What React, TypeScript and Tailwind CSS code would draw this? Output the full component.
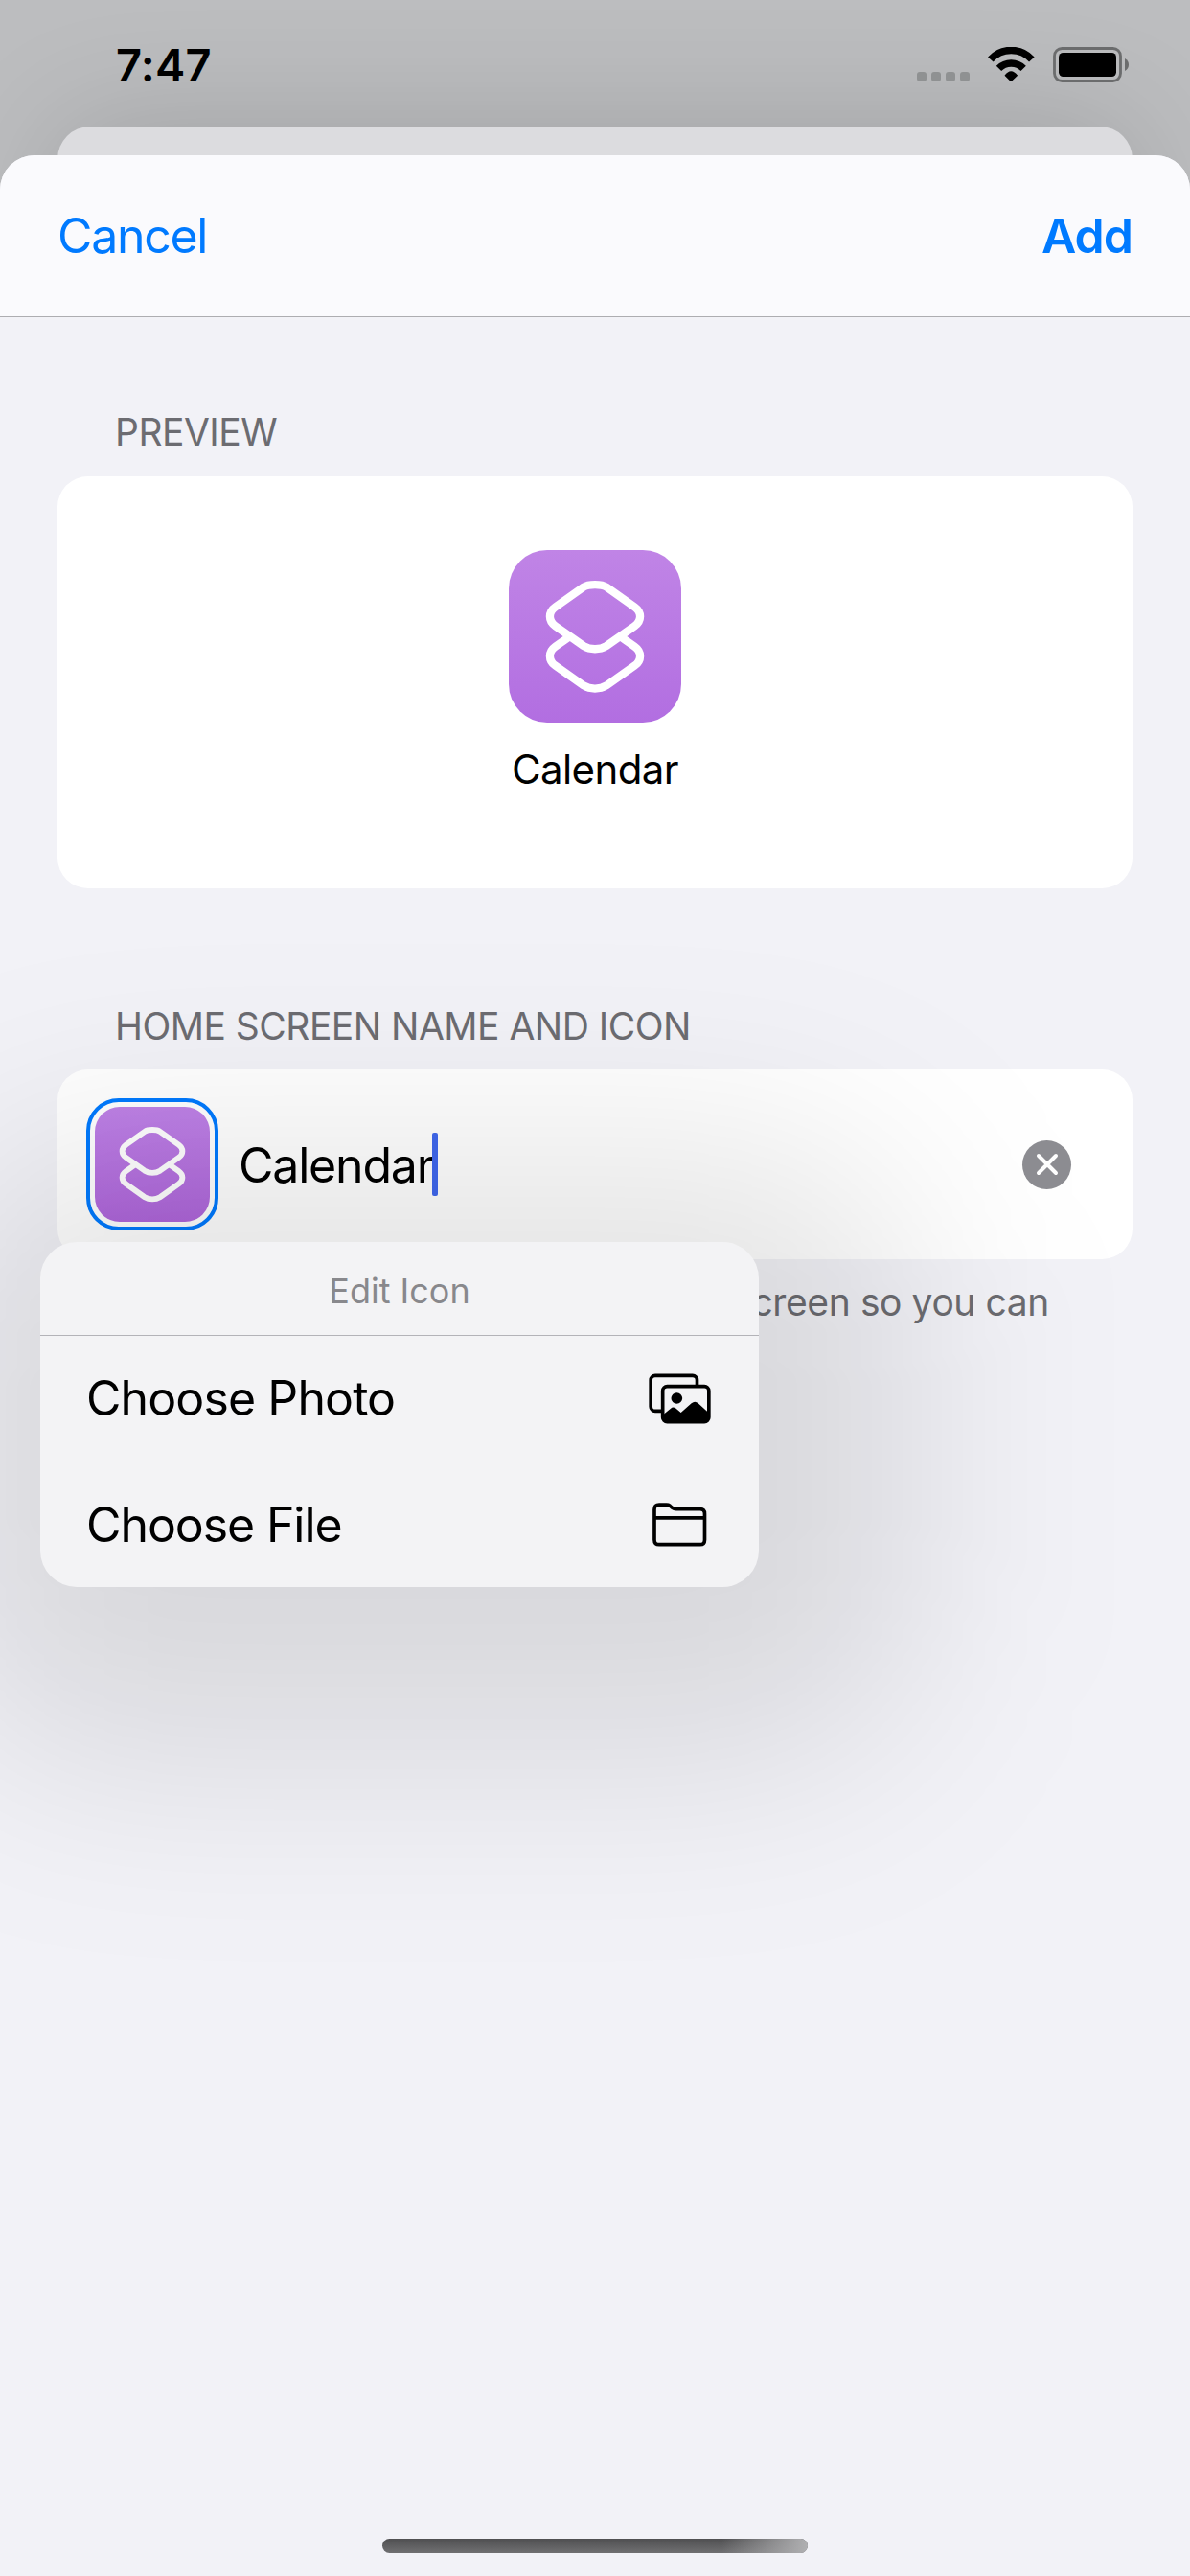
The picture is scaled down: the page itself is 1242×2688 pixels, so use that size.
import React from "react";

function WifiIcon() {
  return (
    <svg className="h-[36px] w-[49px]" viewBox="394 147 146 108" fill="none">
      <path d="M402 186A87 87 0 0 1 531 186" stroke="#000" strokeWidth="22.5" />
      <path d="M428 214A54 54 0 0 1 505 214" stroke="#000" strokeWidth="22.5" />
      <path d="M446 236Q466 209 487 236L468 254Q466 256 464 254Z" fill="#000" />
    </svg>
  );
}

function BatteryIcon() {
  return (
    <svg className="h-[37px] w-[79px]" viewBox="597 147 237 111" fill="none">
      <rect x="601.5" y="151.5" width="207" height="102" rx="24" stroke="#6b6c6d" strokeWidth="8.5" />
      <rect x="615" y="165" width="180" height="75" rx="14" fill="#000" />
      <path d="M822 183Q834 190 834 202.500Q834 215 822 222Z" fill="#6b6c6d" />
    </svg>
  );
}

function ShortcutGlyph({ className, stroke }: { className: string; stroke: number }) {
  return (
    <svg className={className} viewBox="0 0 180 180" fill="none" stroke="#fff" strokeWidth={stroke}>
      <path d="M78 38.700C83 35.200 97 35.200 102 38.700L131.300 59.300C139 64.700 139 74 131.300 79.400L102 100C95 104.300 85 104.300 78 100L48.700 79.400C41 74 41 64.700 48.700 59.300Z" />
      <path d="M63 90.600L48.700 100.600C41 106 41 115.300 48.700 120.700L78 141.300C85 145.600 95 145.600 102 141.300L131.300 120.700C139 115.300 139 106 131.300 100.600L117 90.600" />
    </svg>
  );
}

function PhotosIcon() {
  return (
    <svg className="h-[53px] w-[65px]" viewBox="227 157 195 159" fill="none">
      <rect x="233.500" y="164" width="145" height="111" rx="14" stroke="#000" strokeWidth="11" />
      <rect x="271" y="198" width="144.500" height="111" rx="14" fill="#f3f3f5" stroke="#000" strokeWidth="11" />
      <circle cx="315" cy="235" r="17.500" fill="#000" />
      <path d="M272 287L296 267Q303 260 311 266L328 280L361 251Q372 242 382 251L415 281V296Q415 309 402 309H284Q272 309 272 297Z" fill="#000" />
    </svg>
  );
}

function FolderIcon() {
  return (
    <svg className="h-[46px] w-[57px]" viewBox="240 565 171 138" fill="none" stroke="#000" strokeWidth="11">
      <path d="M246 587Q246 571.500 261 571.500H284Q290 571.500 295 575L302 581Q307 585 314 585H389Q403.500 585 403.500 600V681Q403.500 696 389 696H261Q246 696 246 681Z" />
      <path d="M246 612.500H404" />
    </svg>
  );
}

function StatusBar() {
  return (
    <div className="relative z-10 flex h-[132px] shrink-0 items-start justify-between pl-[121px] pr-[64px]">
      <span className="mt-[38px] text-[47px] font-semibold leading-[60px] tracking-[0.2px] text-black">7:47</span>
      <div className="mt-[49px] flex h-[37px] items-start">
        <div className="mr-[19px] mt-[26px] flex gap-[5px]">
          {[0, 1, 2, 3].map((i) => (
            <span key={i} className="size-[10px] rounded-[3px] bg-[#8f9192]" />
          ))}
        </div>
        <WifiIcon />
        <span className="w-[19px]" />
        <BatteryIcon />
      </div>
    </div>
  );
}

function IconMenu() {
  return (
    <div className="absolute left-[-18px] top-[180px] z-20 h-[360px] w-[750px]">
      <div className="absolute -bottom-[180px] -left-[100px] -right-[160px] -top-[100px] rounded-[160px] bg-black/[0.105] blur-[110px]" />
      <div className="relative flex h-full flex-col rounded-[38px] bg-[#f3f3f5]">
        <div className="flex h-[98px] items-center justify-center border-b border-[#b3b3b8] pt-[5px] text-[36px] text-[#88888c]">
          Edit Icon
        </div>
        <div className="flex h-[131px] items-center justify-between border-b border-[#b3b3b8] pl-[48px] pr-[50px] text-[50px] text-black">
          <span className="tracking-[-0.9px]">Choose Photo</span>
          <PhotosIcon />
        </div>
        <div className="flex flex-1 items-center justify-between pl-[48px] pr-[54px] pt-px text-[50px] text-black">
          <span className="tracking-[-1.1px]">Choose File</span>
          <FolderIcon />
        </div>
      </div>
    </div>
  );
}

export default function App() {
  return (
    <div className="flex h-[2688px] w-[1242px] flex-col overflow-hidden bg-[#bcbdbf] font-['Inter','Liberation_Sans',sans-serif]">
      <StatusBar />
      <div className="mx-[60px] -mb-[370px] h-[400px] shrink-0 rounded-t-[34px] bg-[#dcdcdf] shadow-[0_0_130px_rgba(0,0,0,0.15)]" />
      <main className="relative flex flex-1 flex-col overflow-hidden rounded-t-[36px] bg-[#f2f2f7]">
        <header className="flex h-[169px] shrink-0 items-center justify-between border-b border-[#adadb1] bg-[#fafafd] px-[60px] text-[50px] text-[#007aff]">
          <span className="tracking-[-1.3px]">Cancel</span>
          <span className="font-semibold tracking-[-1px]">Add</span>
        </header>

        <section className="mx-[60px] mt-[96px]">
          <h2 className="pl-[60px] text-[39px] leading-[48px] tracking-[-0.52px] text-[#6c6c71]">PREVIEW</h2>
          <div className="mt-[22px] flex h-[430px] flex-col items-center rounded-[32px] bg-white pt-[77px]">
            <div className="flex size-[180px] items-center justify-center rounded-[40px] bg-linear-to-b from-[#c084e6] to-[#b26ee1]">
              <ShortcutGlyph className="size-full" stroke={8.3} />
            </div>
            <span className="mt-[24px] text-[42px] leading-[50px] tracking-[-0.6px] text-black">Calendar</span>
          </div>
        </section>

        <section className="mx-[60px] mt-[120px]">
          <h2 className="pl-[60px] text-[39px] leading-[48px] tracking-[-0.52px] text-[#6c6c71]">HOME SCREEN NAME AND ICON</h2>
          <div className="relative mt-[21px] flex h-[198px] items-center rounded-[32px] bg-white pl-[30px] pr-[64px]">
            <div className="flex size-[138px] items-center justify-center rounded-[34px] border-4 border-[#007aff]">
              <div className="size-[120px] rounded-[26px] bg-linear-to-b from-[#bf82e7] to-[#b067dc]">
                <ShortcutGlyph className="size-full" stroke={8.8} />
              </div>
            </div>
            <span className="ml-[21px] pt-[2px] text-[50px] tracking-[-1.2px] text-black">Calendar</span>
            <span className="-ml-[1px] h-[66px] w-[6px] rounded-[2px] bg-[#4068ee]" />
            <span className="ml-auto flex size-[51px] items-center justify-center rounded-full bg-[#8d8d92]">
              <svg className="size-[24px]" viewBox="0 0 24 24" stroke="#fff" strokeWidth="4" strokeLinecap="round">
                <path d="M3 3L21 21M21 3L3 21" />
              </svg>
            </span>
            <IconMenu />
          </div>
          <p className="mr-[87px] mt-[21px] whitespace-nowrap text-right text-[39px] leading-[48px] tracking-[-0.4px] text-[#6c6c71]">
            Screen so you can
          </p>
        </section>

        <div className="mx-auto mb-[24px] mt-auto h-[15px] w-[444px] rounded-full bg-linear-to-b from-[#4f4f51] to-[#707072]">
          <div className="ml-auto h-full w-[90px] rounded-r-full bg-linear-to-r from-transparent to-[#b0b0b2]" />
        </div>
      </main>
    </div>
  );
}
